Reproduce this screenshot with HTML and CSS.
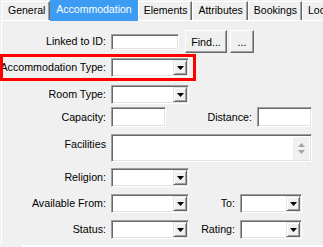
FILE: index.html
```html
<!DOCTYPE html>
<html>
<head>
<meta charset="utf-8">
<link rel="stylesheet" href="styles.css">
</head>
<body>
<div class="window">
  <div class="tabs">
    <div class="tab">General</div>
    <div class="tab tab-active">Accommodation</div>
    <div class="tab">Elements</div>
    <div class="tab">Attributes</div>
    <div class="tab">Bookings</div>
    <div class="tab">Lookups</div>
  </div>
  <div class="panel">
    <div class="form">
      <div class="row">
        <label class="lbl">Linked to ID:</label>
        <div class="edit edit-id"></div>
        <button class="btn btn-find">Find...</button>
        <button class="btn btn-more">...</button>
      </div>
      <div class="row">
        <label class="lbl">Accommodation Type:</label>
        <div class="combo combo-wide"><span class="combo-btn"><svg width="7" height="4" viewBox="0 0 7 4"><path d="M0 0h7L3.5 4z" fill="#000"/></svg></span></div>
      </div>
      <div class="row">
        <label class="lbl">Room Type:</label>
        <div class="combo combo-wide"><span class="combo-btn"><svg width="7" height="4" viewBox="0 0 7 4"><path d="M0 0h7L3.5 4z" fill="#000"/></svg></span></div>
      </div>
      <div class="row">
        <label class="lbl">Capacity:</label>
        <div class="edit edit-num"></div>
        <label class="lbl lbl-dist">Distance:</label>
        <div class="edit edit-num"></div>
      </div>
      <div class="row row-top">
        <label class="lbl lbl-top">Facilities</label>
        <div class="memo">
          <div class="memo-scroll">
            <svg width="7" height="4" viewBox="0 0 7 4"><path d="M0 4h7L3.5 0z" fill="#a3a3a3"/></svg>
            <svg width="7" height="4" viewBox="0 0 7 4"><path d="M0 0h7L3.5 4z" fill="#a3a3a3"/></svg>
          </div>
        </div>
      </div>
      <div class="row">
        <label class="lbl">Religion:</label>
        <div class="combo combo-wide"><span class="combo-btn"><svg width="7" height="4" viewBox="0 0 7 4"><path d="M0 0h7L3.5 4z" fill="#000"/></svg></span></div>
      </div>
      <div class="row">
        <label class="lbl">Available From:</label>
        <div class="combo combo-wide"><span class="combo-btn"><svg width="7" height="4" viewBox="0 0 7 4"><path d="M0 0h7L3.5 4z" fill="#000"/></svg></span></div>
        <label class="lbl lbl-second">To:</label>
        <div class="combo combo-narrow"><span class="combo-btn"><svg width="7" height="4" viewBox="0 0 7 4"><path d="M0 0h7L3.5 4z" fill="#000"/></svg></span></div>
      </div>
      <div class="row">
        <label class="lbl">Status:</label>
        <div class="combo combo-wide"><span class="combo-btn"><svg width="7" height="4" viewBox="0 0 7 4"><path d="M0 0h7L3.5 4z" fill="#000"/></svg></span></div>
        <label class="lbl lbl-second">Rating:</label>
        <div class="combo combo-narrow"><span class="combo-btn"><svg width="7" height="4" viewBox="0 0 7 4"><path d="M0 0h7L3.5 4z" fill="#000"/></svg></span></div>
      </div>
    </div>
  </div>
  <div class="below"></div>
  <div class="highlight"></div>
</div>
</body>
</html>
```
FILE: styles.css
```css
html, body {
  margin: 0;
  padding: 0;
  background: #f0f0f0;
}
body {
  width: 323px;
  height: 247px;
  overflow: hidden;
  font-family: "Liberation Sans", Arial, sans-serif;
  font-size: 10.7px;
  color: #000;
}
.window {
  position: relative;
  width: 323px;
  height: 247px;
  overflow: hidden;
}
.tabs {
  display: flex;
  align-items: flex-end;
  height: 20px;
  padding-left: 2px;
  white-space: nowrap;
  position: relative;
  z-index: 2;
  font-size: 10.5px;
}
.tab {
  flex-shrink: 0;
  box-sizing: border-box;
  height: 19px;
  line-height: 17px;
  padding: 0 4px 0 5px;
  border-top: 1px solid #fff;
  border-left: 1px solid #fff;
  border-right: 1px solid #696969;
  box-shadow: inset -1px 0 #a0a0a0;
}
.tab-active {
  height: 21px;
  margin-bottom: -1px;
  line-height: 19px;
  padding: 0 6px;
  border: 0;
  box-shadow: none;
  background: #3c9cf3;
  color: #fff;
}
.panel {
  margin-left: 1px;
  height: 225px;
  box-sizing: border-box;
  border-top: 1px solid #fff;
  border-left: 1px solid #fff;
}
.form {
  display: grid;
  grid-template-rows: 28px 27px 22px 27px 34px 26px 26px 20px;
  align-items: start;
  padding-top: 9px;
}
.row {
  display: flex;
  align-items: center;
}
.row-top {
  align-items: flex-start;
}
.lbl {
  flex-shrink: 0;
  display: flex;
  justify-content: flex-end;
  width: 104px;
  margin-right: 5px;
  white-space: nowrap;
  line-height: 13px;
}
.lbl-top {
  padding-top: 4px;
}
.lbl-dist {
  width: 86px;
}
.lbl-second {
  width: 46px;
}
.edit, .combo, .memo {
  box-sizing: border-box;
  flex-shrink: 0;
  background: #fff;
  border: 1px solid;
  border-color: #a0a0a0 #fff #fff #a0a0a0;
  box-shadow: inset 1px 1px #696969, inset -1px -1px #e3e3e3;
}
.edit-id {
  width: 68px;
  height: 16px;
  margin-right: 6px;
}
.edit-num {
  width: 55px;
  height: 20px;
}
.btn {
  flex-shrink: 0;
  box-sizing: border-box;
  height: 23px;
  padding: 0;
  font: inherit;
  color: #000;
  background: #f0f0f0;
  border: 1px solid;
  border-color: #fff #696969 #696969 #fff;
  box-shadow: inset -1px -1px #a0a0a0;
}
.btn-find {
  width: 42px;
  margin-right: 3px;
}
.btn-more {
  width: 24px;
}
.combo {
  display: flex;
  justify-content: flex-end;
  height: 19px;
  padding: 1px;
}
.combo-wide {
  width: 78px;
}
.combo-narrow {
  width: 62px;
}
.combo-btn {
  box-sizing: border-box;
  width: 14px;
  display: flex;
  align-items: center;
  justify-content: center;
  background: #f0f0f0;
  border: 1px solid;
  border-color: #e3e3e3 #696969 #696969 #e3e3e3;
  box-shadow: inset 1px 1px #fff, inset -1px -1px #a0a0a0;
}
.memo {
  display: flex;
  justify-content: flex-end;
  width: 201px;
  height: 28px;
  padding: 2px 2px 1px 1px;
}
.memo-scroll {
  width: 16px;
  display: flex;
  flex-direction: column;
  align-items: center;
  justify-content: center;
  gap: 3px;
  background: #f0f0f0;
}
.below {
  margin-left: 22px;
  height: 2px;
  background: #fff;
}
.highlight {
  position: absolute;
  left: 0;
  top: 54px;
  width: 196px;
  height: 27px;
  box-sizing: border-box;
  border: 3px solid #ff0000;
  pointer-events: none;
}
```
